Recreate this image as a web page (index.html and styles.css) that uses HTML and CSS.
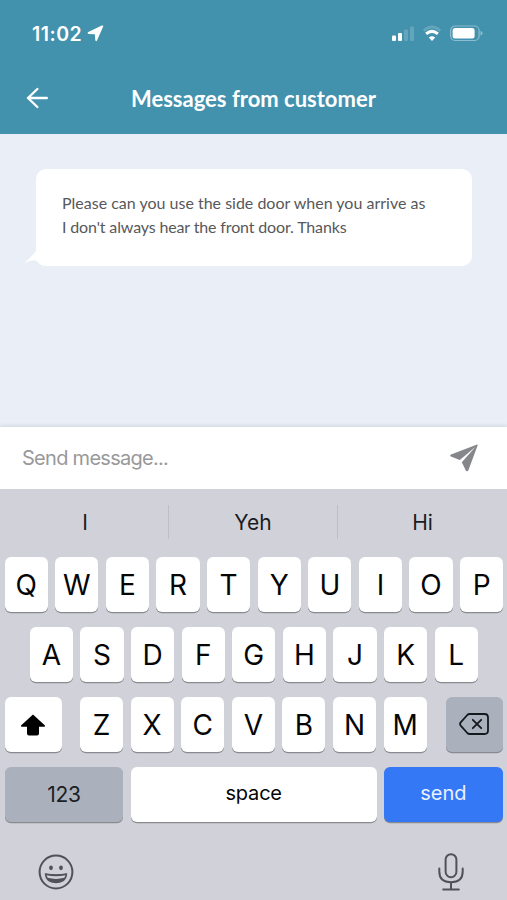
FILE: index.html
```html
<!DOCTYPE html>
<html lang="en">
<head>
    <meta charset="UTF-8">
    <meta name="viewport" content="width=device-width, initial-scale=1.0">
    <title>Messages from customer</title>
    <link rel="stylesheet" href="styles.css">
</head>
<body>

    <header class="header">
        <div class="status-bar">
            <span class="time">11:02</span>
            <svg class="location" width="17" height="17" viewBox="0 0 17 17"><path d="M16.2 1.4 10 15.6Q9 17 8.3 15.2L7.8 9.2 1.5 9Q-.2 8.2 1.3 7L14.8.5Q16.6.2 16.2 1.4Z" fill="#fff"/></svg>
            <svg class="status-icons" width="92" height="18" viewBox="0 0 92 18">
                <g fill="#fff">
                    <rect x="1" y="10.5" width="4" height="5.5" rx="1"/>
                    <rect x="7" y="8" width="4" height="8" rx="1"/>
                    <rect x="13" y="4.5" width="4" height="11.5" rx="1" opacity=".18"/>
                    <rect x="19" y="1.5" width="4" height="14.5" rx="1" opacity=".18"/>
                </g>
                <path d="M32.8 5.7Q41 -1.7 49.2 5.7" fill="none" stroke="#fff" stroke-width="2.7" opacity=".18"/>
                <path d="M35.1 8.9Q41 3.9 46.9 8.9" fill="none" stroke="#fff" stroke-width="3"/>
                <path d="M37.8 12.4Q41 9.9 44.2 12.4L41 15.9Z" fill="#fff"/>
                <rect x="59.6" y="1" width="28.5" height="14.5" rx="4.5" fill="none" stroke="#fff" stroke-width="1.2" opacity=".4"/>
                <rect x="61.6" y="3" width="22" height="10.5" rx="2.5" fill="#fff"/>
                <path d="M89.5 6Q91.5 6.5 91.5 8.3T89.5 10.7Z" fill="#fff" opacity=".4"/>
            </svg>
        </div>
        <div class="title-bar">
            <svg class="back" width="22" height="22" viewBox="0 0 22 22"><path d="M20.8 11H2M11.4 2 2 11l9.4 9" fill="none" stroke="#fff" stroke-width="2.4" stroke-linecap="round" stroke-linejoin="round"/></svg>
            <h1 class="title">Messages from customer</h1>
        </div>
    </header>

    <main class="chat">
        <div class="bubble">
            <p class="line line-first">Please can you use the side door when you arrive as</p>
            <p class="line line-second">I don't always hear the front door. Thanks</p>
            <svg class="tail" width="20" height="18" viewBox="0 0 20 18"><path d="M12.5 2Q8 9 0 15Q8 11.8 12 12.5Q14 14 17 17L20 18V2Z" fill="#fff"/></svg>
        </div>
    </main>

    <div class="composer">
        <span class="placeholder">Send message...</span>
        <svg class="send-icon" width="28" height="28" viewBox="0 0 28 28"><path d="M27.1.4Q28 .4 27.6 1.6L18.4 26.2Q17.2 28.4 15.8 26.4L11.8 18.2 25.6 2.8 9.8 16.1.8 12.4Q-.5 11.3 1 10.5Z" fill="#86878b"/></svg>
    </div>

    <section class="keyboard">
        <div class="suggestions">
            <span>I</span>
            <span>Yeh</span>
            <span>Hi</span>
        </div>
        <div class="keys">
            <div class="row">
                <span class="key">Q</span><span class="key">W</span><span class="key">E</span><span class="key">R</span><span class="key">T</span><span class="key">Y</span><span class="key">U</span><span class="key">I</span><span class="key">O</span><span class="key">P</span>
            </div>
            <div class="row row-middle">
                <span class="key">A</span><span class="key">S</span><span class="key">D</span><span class="key">F</span><span class="key">G</span><span class="key">H</span><span class="key">J</span><span class="key">K</span><span class="key">L</span>
            </div>
            <div class="row">
                <span class="key key-shift"><svg width="26" height="22" viewBox="0 0 26 22"><path d="M13 .5 25 11.5Q25.4 12.7 24 12.7H19V19.5Q19 21.5 17 21.5H9Q7 21.5 7 19.5V12.7H2Q.6 12.7 1 11.5Z" fill="#000"/></svg></span>
                <span class="key">Z</span><span class="key">X</span><span class="key">C</span><span class="key">V</span><span class="key">B</span><span class="key">N</span><span class="key">M</span>
                <span class="key key-delete"><svg width="30" height="22" viewBox="0 0 30 22"><g fill="none" stroke="#15181c" stroke-width="1.8" stroke-linecap="round" stroke-linejoin="round"><path d="M10.5 1H25.5Q29 1 29 4.5V17.5Q29 21 25.5 21H10.5Q9.3 21 8.3 20L1.7 12.6Q.4 11 1.7 9.4L8.3 2Q9.3 1 10.5 1Z"/><path d="m13.8 6.8 8.4 8.4m0-8.4-8.4 8.4"/></g></svg></span>
            </div>
            <div class="row row-bottom">
                <span class="key key-numbers">123</span>
                <span class="key key-space">space</span>
                <span class="key key-send">send</span>
            </div>
        </div>
        <div class="keyboard-footer">
            <svg width="36" height="36" viewBox="0 0 36 36"><circle cx="18" cy="18" r="16.4" fill="none" stroke="#505257" stroke-width="2"/><ellipse cx="13" cy="13.8" rx="1.9" ry="2.4" fill="#505257"/><ellipse cx="23" cy="13.8" rx="1.9" ry="2.4" fill="#505257"/><path d="M7.3 19.8Q18 21.7 28.7 19.8Q28 28.7 18 28.7T7.3 19.8Z" fill="#505257" stroke="#505257" stroke-width="1.2" stroke-linejoin="round"/><path d="M8.6 21.2Q18 23.1 27.4 21.2L26.4 23.8Q18 26 9.6 23.8Z" fill="#d1d2d9"/></svg>
            <svg width="26" height="38" viewBox="0 0 26 38"><g fill="none" stroke="#505257" stroke-width="2" stroke-linecap="round"><rect x="7.6" y="1.2" width="10.8" height="23" rx="5.4"/><path d="M1.3 15.5V18.5Q1.3 29.2 13 29.2T24.7 18.5V15.5M13 29.2V36.4M5.2 36.4H20.8"/></g></svg>
        </div>
    </section>

</body>
</html>
```
FILE: styles.css
```css
* {
    box-sizing: border-box;
}

body {
    width: 507px;
    height: 900px;
    margin: 0;
    overflow: hidden;
    display: flex;
    flex-direction: column;
    font-family: Inter, "Liberation Sans", sans-serif;
    background-color: #eaeff7;
}

.header {
    height: 134px;
    flex: none;
    background-color: #4292ae;
    color: white;
}

.status-bar {
    display: flex;
    align-items: center;
    height: 67px;
    padding: 0 24px 0 32px;
}

.time {
    width: 55px;
    font-size: 19.5px;
    font-weight: 600;
    letter-spacing: 0.5px;
    line-height: 24px;
    white-space: nowrap;
}

.status-icons {
    margin-left: auto;
}

.title-bar {
    display: flex;
    align-items: center;
    height: 63px;
    padding-left: 26px;
}

.back {
    margin-top: -1px;
}

.title {
    margin: 0 0 0 83px;
    font-family: Lato, sans-serif;
    font-size: 22px;
    font-weight: 700;
    line-height: 28px;
    white-space: nowrap;
}

.chat {
    height: 293px;
    flex: none;
    padding: 35px 35px 0 36px;
}

.bubble {
    position: relative;
    height: 97px;
    padding: 22px 26px;
    border-radius: 10px;
    background-color: white;
}

.line {
    margin: 0;
    font-family: Lato, sans-serif;
    font-size: 16px;
    line-height: 24px;
    color: #58585a;
    white-space: nowrap;
}

.line-second {
    letter-spacing: -0.14px;
}

.tail {
    position: absolute;
    left: -12px;
    bottom: 0;
}

.composer {
    display: flex;
    align-items: center;
    justify-content: space-between;
    height: 62px;
    flex: none;
    padding: 0 29px 0 22px;
    background-color: white;
    box-shadow: 0 -1px 4px rgba(0, 0, 0, 0.12);
}

.placeholder {
    font-size: 20px;
    letter-spacing: -0.72px;
    color: #98999b;
}

.keyboard {
    flex: 1;
    background-color: #d1d2d9;
}

.suggestions {
    display: grid;
    grid-template-columns: 168px 169px 170px;
    height: 68px;
    padding-top: 16px;
}

.suggestions span {
    height: 34px;
    padding-top: 1px;
    font-size: 21px;
    line-height: 34px;
    text-align: center;
    color: #1b1c1f;
}

.suggestions span:first-child {
    padding-left: 2px;
}

.suggestions span + span {
    border-left: 1px solid #bdbfc5;
}

.keys {
    display: flex;
    flex-direction: column;
    gap: 15.5px;
    padding: 0 4px 0 4.7px;
}

.row {
    display: flex;
    gap: 7.5px;
    height: 54.5px;
}

.row-middle {
    padding-left: 25.2px;
}

.key {
    display: flex;
    align-items: center;
    justify-content: center;
    width: 43.1px;
    flex: none;
    padding-top: 2px;
    border-radius: 6px;
    background-color: white;
    box-shadow: 0 1.3px 0 #898b90;
    font-size: 28px;
    color: #050505;
}

.key-shift {
    width: 57.6px;
    margin-right: 10.2px;
}

.key-delete {
    width: 57px;
    margin-left: 11.6px;
    padding-top: 0;
    background-color: #abb1bc;
}

.row-bottom .key {
    padding: 0 0 3px;
    font-size: 20px;
}

.row-bottom .key-numbers {
    width: 118.5px;
    padding: 1px 0 0;
    font-size: 21px;
    letter-spacing: -0.3px;
    background-color: #abb1bc;
    color: #1b1e24;
}

.row-bottom .key-space {
    width: 246px;
    letter-spacing: -0.2px;
}

.row-bottom .key-send {
    width: 118.5px;
    background-color: #3478f6;
    color: #eaf1ff;
}

.keyboard-footer {
    display: flex;
    justify-content: space-between;
    align-items: center;
    padding: 31px 43px 0 38px;
}
```
